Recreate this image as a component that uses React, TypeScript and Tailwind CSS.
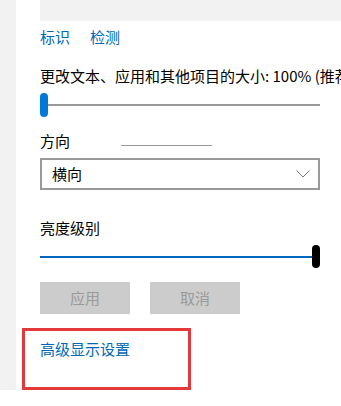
const FONT = "font-['Noto_Sans_CJK_SC',sans-serif]";

const Slider = ({ value }: { value: 'min' | 'max' }) => {
  if (value === 'min') {
    return (
      <div className="flex w-[280px] h-6 items-center">
        <div className="w-2 h-6 rounded-full bg-[#0078d7]" />
        <div className="flex-1 h-[2px] bg-[#999999]" />
      </div>
    );
  }
  return (
    <div className="flex w-[280px] h-[23px] items-center">
      <div className="flex-1 h-[2px] bg-[#0067c0]" />
      <div className="w-2 h-[23px] rounded-full bg-black" />
    </div>
  );
};

export default function App() {
  return (
    <div className={`w-[341px] h-[406px] bg-white overflow-hidden text-[15px] leading-5 text-black ${FONT}`}>
      <div className="flex h-[390px]">
        <div className="w-4 bg-[#f2f2f2]" />
        <div className="flex-1 flex flex-col pl-6 min-w-0">
          <div className="h-[21px] bg-[#f2f2f2]" />

          <div className="mt-[6px] flex gap-5 text-[#0067b8]">
            <span>标识</span>
            <span>检测</span>
          </div>

          <div className="mt-[19px] whitespace-nowrap">更改文本、应用和其他项目的大小: 100% (推荐)</div>

          <div className="mt-[7px]">
            <Slider value="min" />
          </div>

          <div className="mt-[14px] flex h-5">
            <span>方向</span>
            <div className="ml-[51px] mt-[14px] w-[91px] h-px bg-[#999999]" />
          </div>

          <div className="mt-[7px] w-[280px] h-8 border-2 border-[#999999] flex items-center justify-between pl-[10px] pr-2">
            <span>横向</span>
            <svg width="14" height="8" viewBox="0 0 14 8" fill="none">
              <polyline points="0.5,0.5 7,7 13.5,0.5" stroke="#7a7a7a" strokeWidth="1" />
            </svg>
          </div>

          <div className="mt-[28px]">亮度级别</div>

          <div className="mt-[7px]">
            <Slider value="max" />
          </div>

          <div className="mt-[14px] flex gap-5">
            <button className="w-[90px] h-8 bg-[#cccccc] text-[#9a9a9a]">应用</button>
            <button className="w-[90px] h-8 bg-[#cccccc] text-[#9a9a9a]">取消</button>
          </div>

          <div className="mt-[14px] -ml-[18px] w-[169px] h-[62px] border-[3px] border-[#e5383b] pl-[15px] pt-2">
            <span className="text-[#0067b8]">高级显示设置</span>
          </div>
        </div>
      </div>
    </div>
  );
}
